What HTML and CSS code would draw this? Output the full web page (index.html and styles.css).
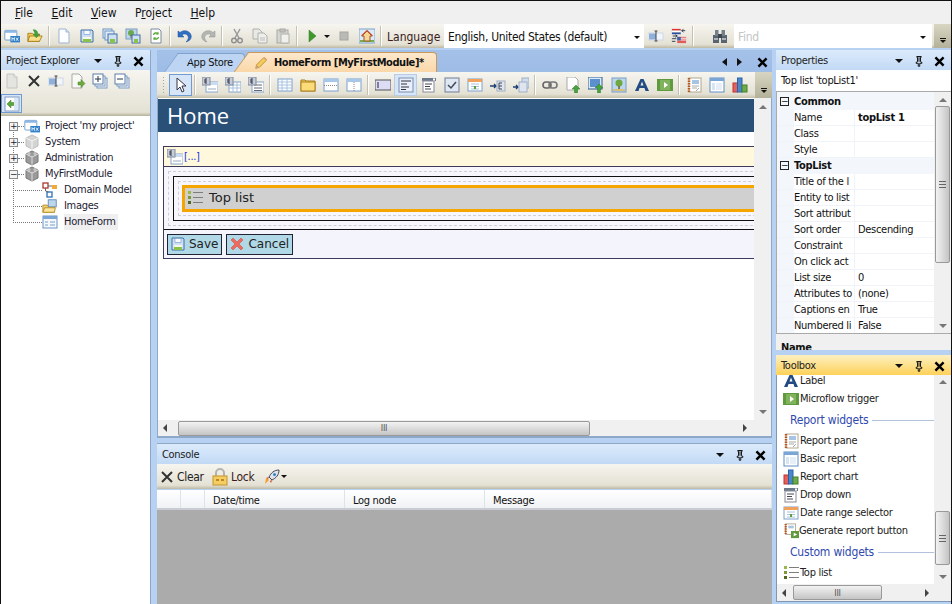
FILE: index.html

```html
<!DOCTYPE html>
<html lang="en">
<head>
  <meta charset="UTF-8" />
  <meta name="viewport" content="width=device-width, initial-scale=1.0" />
  <title>Mendix Business Modeler</title>
  <link rel="stylesheet" href="styles.css">
</head>
<body>
  <svg class="defs" width="0" height="0">
    <defs>
      <symbol id="i-project" viewBox="0 0 20 16"><rect x="1" y="1" width="15" height="12" rx="1" fill="#fff" stroke="#5b8ec4"/><rect x="1" y="1" width="15" height="3" fill="#8fb8e4"/><rect x="8" y="8" width="12" height="8" fill="#2f80c8"/><path d="M10 14v-4l1.500 2 1.500-2v4M15 10l3 4M18 10l-3 4" stroke="#fff" fill="none"/></symbol>
      <symbol id="i-open" viewBox="0 0 18 16"><path d="M1 14V5h5l1 1h7v8z" fill="#f3c95a" stroke="#a97c1d"/><path d="M1 14l2-6h14l-3 6z" fill="#fbe08c" stroke="#a97c1d"/><path d="M7 1c4 0 5 2 5 5h2l-3.500 4L7 6h2c0-2-1-3-2-5z" fill="#3fa535" stroke="#2a7a22" stroke-width=".5"/></symbol>
      <symbol id="i-doc" viewBox="0 0 16 16"><path d="M3 1h7l3 3v11H3z" fill="#fdfeff" stroke="#9db5d0"/><path d="M10 1v3h3" fill="#dfe9f4" stroke="#9db5d0"/></symbol>
      <symbol id="i-docgray" viewBox="0 0 16 16"><path d="M3 1h7l3 3v11H3z" fill="#e4e4e0" stroke="#c4c4c0"/><path d="M10 1v3h3" fill="#f2f2ee" stroke="#c4c4c0"/></symbol>
      <symbol id="i-save" viewBox="0 0 16 16"><path d="M2 2h11l1 1v11H2z" fill="#cfe0f5" stroke="#3e6ea8"/><rect x="5" y="2.500" width="6" height="4" fill="#f7fbff" stroke="#6f95c0" stroke-width=".6"/><rect x="4" y="9" width="8" height="5" fill="#8bc34a"/><rect x="4" y="9" width="8" height="2" fill="#f4f8ec"/></symbol>
      <symbol id="i-saveall" viewBox="0 0 16 16"><rect x="1" y="1" width="9" height="9" fill="#e2ecf8" stroke="#6f95c0"/><rect x="3" y="3" width="9" height="9" fill="#e2ecf8" stroke="#6f95c0"/><rect x="6" y="6" width="9" height="9" fill="#cfe0f5" stroke="#3e6ea8"/><rect x="8" y="11" width="5" height="4" fill="#8bc34a"/></symbol>
      <symbol id="i-saveimg" viewBox="0 0 16 16"><rect x="1" y="1" width="11" height="10" fill="#bcd6ee" stroke="#7a9cc0"/><circle cx="6" cy="5" r="3" fill="#6ba84f"/><rect x="5.500" y="7" width="1" height="3" fill="#7a5a30"/><rect x="7" y="7" width="8" height="8" fill="#cfe0f5" stroke="#3e6ea8"/><rect x="9" y="11" width="4" height="4" fill="#8bc34a"/></symbol>
      <symbol id="i-refresh" viewBox="0 0 16 16"><path d="M3 1h8l2 2v12H3z" fill="#fff" stroke="#7d8ba0"/><path d="M5.500 7a2.500 2.500 0 0 1 4.500-1M10.500 9a2.500 2.500 0 0 1-4.500 1" fill="none" stroke="#58a632" stroke-width="1.300"/><path d="M10.500 3.500v3h-3zM5.500 12.500v-3h3z" fill="#58a632"/></symbol>
      <symbol id="i-undo" viewBox="0 0 16 16"><path d="M1 3v6h6L5 7c2-2 5-1 6 1 1 2 0 4-2 6 4-1 6-4 5-7-1-4-7-6-11-2.500z" fill="#2f6fc4" stroke="#1c4d92" stroke-width=".5"/></symbol>
      <symbol id="i-redo" viewBox="0 0 16 16"><path d="M15 3v6H9l2-2C9 5 6 6 5 8c-1 2 0 4 2 6-4-1-6-4-5-7 1-4 7-6 11-2.500z" fill="#b4b6b4" stroke="#8f918f" stroke-width=".5"/></symbol>
      <symbol id="i-cut" viewBox="0 0 16 16"><path d="M5 1l5 9M11 1L6 10" stroke="#9a9c9c" stroke-width="1.500" fill="none"/><circle cx="5" cy="12.500" r="2.300" fill="none" stroke="#8f8f8f" stroke-width="1.400"/><circle cx="11" cy="12.500" r="2.300" fill="none" stroke="#8f8f8f" stroke-width="1.400"/></symbol>
      <symbol id="i-copy" viewBox="0 0 16 16"><path d="M1 1h6l3 3v7H1z" fill="#e8e8e4" stroke="#b0b0ac"/><path d="M6 5h6l3 3v7H6z" fill="#eeeeea" stroke="#b0b0ac"/><path d="M8 10h5M8 12h5" stroke="#bdbdb9"/></symbol>
      <symbol id="i-paste" viewBox="0 0 16 16"><rect x="2" y="2" width="11" height="13" fill="#d7d7d2" stroke="#a8a8a4"/><rect x="5" y="1" width="5" height="3" fill="#c4c4c0" stroke="#a8a8a4"/><rect x="6" y="6" width="8" height="9" fill="#f0f0ec" stroke="#b0b0ac"/></symbol>
      <symbol id="i-play" viewBox="0 0 16 16"><path d="M5 2l7 6-7 6z" fill="#3f9a2c" stroke="#2f7d20" stroke-width=".5"/></symbol>
      <symbol id="i-stop" viewBox="0 0 16 16"><rect x="4" y="4" width="8" height="8" fill="#b9b9b5" stroke="#a5a5a1"/></symbol>
      <symbol id="i-home" viewBox="0 0 16 16"><rect x="0" y="1" width="16" height="14" fill="#dbe9f8" stroke="#7ea3cc"/><rect x="1" y="12" width="14" height="2" fill="#75ad4a"/><path d="M3 8l5-5 5 5h-2v5H5V8z" fill="#f4d89a" stroke="#a5552a"/><path d="M2.500 8L8 2.500 13.500 8" fill="none" stroke="#c2502a" stroke-width="1.200"/></symbol>
      <symbol id="i-rename" viewBox="0 0 16 16"><rect x="0" y="5" width="15" height="7" fill="#f2f6fc" stroke="#cfd8e4"/><rect x="1" y="5.500" width="7" height="6" fill="#8fb0d8"/><path d="M8 3v10M6.500 3h3M6.500 13h3" stroke="#444" fill="none"/></symbol>
      <symbol id="i-flags" viewBox="0 0 18 18"><rect x="1" y="1" width="10" height="2" fill="#d33"/><rect x="1" y="3" width="10" height="2" fill="#fff" stroke="#ccc" stroke-width=".3"/><rect x="1" y="5" width="10" height="2" fill="#2a4f9c"/><path d="M12 3h4M14 1.500L12 3l2 1.500M2 9h5M5 7.500L7 9 5 10.500" stroke="#234" fill="none"/><rect x="7" y="10" width="10" height="7" fill="#e25b5b"/><rect x="7" y="11" width="10" height="1" fill="#fff"/><rect x="7" y="13" width="10" height="1" fill="#fff"/><rect x="7" y="10" width="4" height="4" fill="#3a5fa8"/><path d="M1 12h5M1 15h4" stroke="#234"/></symbol>
      <symbol id="i-binoc" viewBox="0 0 16 16"><rect x="1" y="7" width="6" height="8" fill="#5a6470"/><rect x="9" y="7" width="6" height="8" fill="#5a6470"/><rect x="3" y="2" width="3.500" height="6" fill="#76808c"/><rect x="9.500" y="2" width="3.500" height="6" fill="#76808c"/><rect x="6" y="6" width="4" height="4" fill="#3e4650"/><rect x="2" y="10" width="4" height="2" fill="#aab2bc"/><rect x="10" y="10" width="4" height="2" fill="#aab2bc"/></symbol>
      <symbol id="i-x" viewBox="0 0 16 16"><path d="M3 3l10 10M13 3L3 13" stroke="#333" stroke-width="2" fill="none"/></symbol>
      <symbol id="i-docgo" viewBox="0 0 16 16"><path d="M2 1h7l3 3v11H2z" fill="#f8f8f4" stroke="#a9a9a5"/><path d="M8 9h3V6.500l4 4-4 4V12H8z" fill="#6fa83e" stroke="#47802a" stroke-width=".5"/></symbol>
      <symbol id="i-expand" viewBox="0 0 16 16"><rect x="5" y="5" width="10" height="10" fill="#eef4fb" stroke="#7d9cc0"/><rect x="3" y="3" width="10" height="10" fill="#eef4fb" stroke="#7d9cc0"/><rect x="1" y="1" width="10" height="10" fill="#fff" stroke="#5f7fa6"/><path d="M3 6h6M6 3v6" stroke="#234"/></symbol>
      <symbol id="i-collapse" viewBox="0 0 16 16"><rect x="5" y="5" width="10" height="10" fill="#eef4fb" stroke="#7d9cc0"/><rect x="3" y="3" width="10" height="10" fill="#eef4fb" stroke="#7d9cc0"/><rect x="1" y="1" width="10" height="10" fill="#fff" stroke="#5f7fa6"/><path d="M3 6h6" stroke="#234"/></symbol>
      <symbol id="i-sync" viewBox="0 0 16 16"><rect x="1" y="1" width="14" height="14" fill="#fff" stroke="#7d9cc0"/><path d="M3 8l4-4v2.500h5v3H7V12z" fill="#5aa83a" stroke="#38802a" stroke-width=".5"/><rect x="10" y="2" width="4" height="12" fill="#dbe7f4"/></symbol>
      <symbol id="i-cube" viewBox="0 0 16 16"><path d="M8 1l6 3v8l-6 3-6-3V4z" fill="#9a9a9a" stroke="#777"/><path d="M2 4l6 3 6-3M8 7v8" stroke="#dedede" fill="none"/><circle cx="5" cy="3.500" r="1.500" fill="#c6c6c6"/><circle cx="11" cy="3.500" r="1.500" fill="#c6c6c6"/></symbol>
      <symbol id="i-cubelight" viewBox="0 0 16 16"><path d="M8 1l6 3v8l-6 3-6-3V4z" fill="#d4d4d4" stroke="#bdbdbd"/><path d="M2 4l6 3 6-3M8 7v8" stroke="#f4f4f4" fill="none"/></symbol>
      <symbol id="i-domain" viewBox="0 0 16 16"><rect x="1" y="1" width="5" height="5" fill="#fff" stroke="#b2352a" stroke-width="1.300"/><rect x="10" y="3" width="5" height="4" fill="#f2a93a"/><rect x="5" y="10" width="5" height="5" fill="#fff" stroke="#2e6fb5" stroke-width="1.300"/><path d="M6 4h4M3.500 6v3l3 1" stroke="#666" fill="none"/></symbol>
      <symbol id="i-images" viewBox="0 0 18 16"><path d="M1 15V7h5l1 1h7v7z" fill="#f6d36a" stroke="#b28a28"/><rect x="7" y="1" width="9" height="8" fill="#bcd6ee" stroke="#5f86b0"/><path d="M1 15l2-5h12l-1 5z" fill="#fce69c" stroke="#b28a28"/></symbol>
      <symbol id="i-form" viewBox="0 0 16 16"><rect x="1" y="2" width="14" height="12" fill="#f4f8fd" stroke="#6a94c4"/><rect x="1" y="2" width="14" height="3" fill="#7aa5d6"/><path d="M3 8h3M8 8h5M3 11h3M8 11h5" stroke="#7aa0c8"/></symbol>
      <symbol id="i-ptr" viewBox="0 0 16 16"><path d="M4 1v12l3-3 2 5 2-1-2-5h4z" fill="#fff" stroke="#334"/></symbol>
      <symbol id="i-dv" viewBox="0 0 16 16"><rect x="4" y="5" width="12" height="10" fill="#fff" stroke="#86a6cc"/><rect x="4" y="5" width="12" height="3" fill="#c9dcf2"/><rect x="0" y="0" width="8" height="8" fill="#c7cdd8" stroke="#7f8a9c"/><path d="M3 2v4M3 2h2M3 4h2M3 6h2" stroke="#334" fill="none"/><path d="M6 12h8" stroke="#9ab"/></symbol>
      <symbol id="i-dg" viewBox="0 0 16 16"><rect x="4" y="5" width="12" height="10" fill="#fff" stroke="#86a6cc"/><path d="M4 8h12M4 11h12M8 5v10M12 5v10" stroke="#a9c0dc"/><rect x="0" y="0" width="8" height="8" fill="#c7cdd8" stroke="#7f8a9c"/><path d="M3 2v4M3 2h2M3 4h2M3 6h2" stroke="#334" fill="none"/></symbol>
      <symbol id="i-tv" viewBox="0 0 16 16"><rect x="4" y="5" width="12" height="10" fill="#fff" stroke="#86a6cc"/><path d="M6 8h8M6 11h8M6 13.500h8" stroke="#667"/><rect x="0" y="0" width="8" height="8" fill="#c7cdd8" stroke="#7f8a9c"/><path d="M3 2v4M3 2h2M3 4h2M3 6h2" stroke="#334" fill="none"/></symbol>
      <symbol id="i-table" viewBox="0 0 16 16"><rect x="1" y="2" width="14" height="12" fill="#fff" stroke="#7aa0cc"/><path d="M1 5h14M1 8h14M1 11h14M5 2v12M10 2v12" stroke="#a8c2e0"/></symbol>
      <symbol id="i-tabfolder" viewBox="0 0 16 16"><path d="M1 14V3h4l1 1h9v10z" fill="#f6cf58" stroke="#a98020"/><rect x="1" y="5" width="14" height="9" fill="#fbdc78" stroke="#a98020"/></symbol>
      <symbol id="i-rows" viewBox="0 0 16 16"><rect x="1" y="2" width="14" height="12" fill="#fff" stroke="#7aa0cc"/><rect x="1" y="2" width="14" height="3" fill="#a8c8ea"/><path d="M1 8.500h14" stroke="#8a8a8a" stroke-dasharray="1 1"/></symbol>
      <symbol id="i-cols" viewBox="0 0 16 16"><rect x="1" y="2" width="14" height="12" fill="#fff" stroke="#7aa0cc"/><rect x="1" y="2" width="14" height="3" fill="#a8c8ea"/><path d="M8 5v9" stroke="#8a8a8a" stroke-dasharray="1 1"/></symbol>
      <symbol id="i-input" viewBox="0 0 16 16"><rect x="0" y="3" width="16" height="10" fill="#dcdcf4" stroke="#555"/><path d="M3 5v6" stroke="#223"/></symbol>
      <symbol id="i-textarea" viewBox="0 0 16 16"><rect x="1" y="1" width="14" height="14" fill="#e8eefa" stroke="#7d8fb0"/><path d="M3 4h10M3 7h6M3 10h8M3 12.500h5" stroke="#334"/></symbol>
      <symbol id="i-drop" viewBox="0 0 16 16"><rect x="1" y="1" width="14" height="3" fill="#6c7a8c"/><rect x="2" y="4" width="11" height="11" fill="#fff" stroke="#889"/><path d="M4 7h7M4 9.500h5M4 12h6" stroke="#445"/><rect x="12" y="1.500" width="2" height="2" fill="#fff"/></symbol>
      <symbol id="i-check" viewBox="0 0 16 16"><rect x="1" y="1" width="14" height="14" fill="#dfe7f2" stroke="#6f7f96"/><path d="M4 8l3 3 5-6" stroke="#3f4a5a" stroke-width="1.500" fill="none"/></symbol>
      <symbol id="i-date" viewBox="0 0 16 16"><rect x="1" y="2" width="14" height="12" fill="#fff" stroke="#7aa0cc"/><rect x="1" y="2" width="14" height="3" fill="#f0a25c"/><path d="M4 7h8M4 9.500h8M4 12h8" stroke="#a8c2e0"/><rect x="7" y="9" width="2" height="3" fill="#59a23a"/></symbol>
      <symbol id="i-ref" viewBox="0 0 16 16"><path d="M0 9h6M4 7l2 2-2 2" stroke="#1c3f78" stroke-width="1.300" fill="none"/><rect x="7" y="4" width="8" height="10" fill="#dfe5ee" stroke="#9fb0c4"/><path d="M9 6v6M9 6h3M9 9h3M9 12h3" stroke="#445" fill="none"/></symbol>
      <symbol id="i-refs" viewBox="0 0 16 16"><path d="M0 10h5M3 8l2 2-2 2" stroke="#1c3f78" stroke-width="1.300" fill="none"/><rect x="9" y="1" width="7" height="10" fill="#cfdcee" stroke="#9fb0c4"/><rect x="6" y="5" width="8" height="10" fill="#dfe5ee" stroke="#9fb0c4"/></symbol>
      <symbol id="i-link" viewBox="0 0 16 16"><rect x="1" y="5" width="8" height="6" rx="3" fill="none" stroke="#666" stroke-width="1.600"/><rect x="7" y="5" width="8" height="6" rx="3" fill="none" stroke="#777" stroke-width="1.600"/></symbol>
      <symbol id="i-docup" viewBox="0 0 16 16"><path d="M2 0h8l3 3v10H2z" fill="#fff" stroke="#a9a9b0"/><path d="M11 8l4 4h-2.500v4h-3v-4H7z" fill="#49a23c" stroke="#2f7d2a" stroke-width=".5"/></symbol>
      <symbol id="i-imgup" viewBox="0 0 16 16"><rect x="0" y="0" width="14" height="12" fill="#dbe9f8" stroke="#2d5d95"/><rect x="2" y="2" width="10" height="8" fill="#5b90cc"/><path d="M11 7l4 4h-2.500v5h-3v-5H7z" fill="#49a23c" stroke="#2f7d2a" stroke-width=".5"/></symbol>
      <symbol id="i-image" viewBox="0 0 16 16"><rect x="1" y="1" width="14" height="14" fill="#bcd6f0" stroke="#7a9cc0"/><circle cx="8" cy="6" r="3.500" fill="#6fa83e"/><rect x="7.300" y="9" width="1.500" height="3" fill="#7a5a30"/><rect x="2" y="12" width="12" height="2" fill="#d8c27a"/></symbol>
      <symbol id="i-label" viewBox="0 0 16 16"><path d="M1 14L6.500 2h3L15 14h-3.500l-1-3h-5l-1 3zM6.500 8.500h3L8 4.500z" fill="#234a82"/></symbol>
      <symbol id="i-micro" viewBox="0 0 16 16"><rect x="0" y="2" width="16" height="12" fill="#5f9a3e"/><rect x="3" y="3" width="10" height="10" fill="#80b35c"/><path d="M7 5l4 3-4 3z" fill="#fff"/></symbol>
      <symbol id="i-pane" viewBox="0 0 16 16"><rect x="3" y="1" width="12" height="14" fill="#fff" stroke="#b0a890"/><path d="M3 1v14" stroke="#b5561e" stroke-width="2.500" stroke-dasharray="1.500 1"/><rect x="6" y="3" width="7" height="4" fill="#a8c4e4"/><path d="M6 9h7M6 11h5M10 14l3-3" stroke="#aaa"/></symbol>
      <symbol id="i-basic" viewBox="0 0 16 16"><rect x="1" y="1" width="14" height="14" fill="#fff" stroke="#5f8fc4"/><rect x="1" y="1" width="14" height="3" fill="#7aa5d6"/><rect x="3" y="6" width="3" height="7" fill="#d7e4f2"/><rect x="7" y="6" width="6" height="7" fill="#e7eef7"/></symbol>
      <symbol id="i-chart" viewBox="0 0 16 16"><rect x="1" y="6" width="4.500" height="9" fill="#e4605c" stroke="#b33"/><rect x="5.500" y="1" width="4.500" height="14" fill="#4a86cc" stroke="#2a62a8"/><rect x="10" y="8" width="5" height="7" fill="#6caa4a" stroke="#47802a"/></symbol>
      <symbol id="i-gen" viewBox="0 0 18 16"><rect x="3" y="0" width="11" height="12" fill="#fff" stroke="#b0a890"/><path d="M3 0v12" stroke="#b5561e" stroke-width="2.500" stroke-dasharray="1.500 1"/><rect x="6" y="2" width="6" height="3" fill="#a8c4e4"/><rect x="9" y="8" width="9" height="8" fill="#5f9a3e"/><path d="M12 10l4 2-4 2z" fill="#fff"/></symbol>
      <symbol id="i-toplist" viewBox="0 0 16 16"><rect x="1" y="1" width="3" height="3" fill="#9ab84a"/><rect x="1" y="6" width="3" height="3" fill="#7a9a3a"/><rect x="1" y="11" width="3" height="3" fill="#4d6a20"/><path d="M6 2.500h10M6 7.500h10M6 12.500h10" stroke="#7d7d7d"/></symbol>
      <symbol id="i-lock" viewBox="0 0 16 18"><path d="M4 8V5a4 4 0 0 1 8 0v3" fill="none" stroke="#b3b3b3" stroke-width="2"/><rect x="1" y="8" width="14" height="9" fill="#f6cd62" stroke="#c2942c"/><rect x="4" y="11" width="3" height="2" fill="#b98a24"/><rect x="9" y="11" width="3" height="2" fill="#b98a24"/></symbol>
      <symbol id="i-rocket" viewBox="0 0 16 16"><path d="M15 1c-5 0-8 3-10 7l3 3c4-2 7-5 7-10z" fill="#dfe3ea" stroke="#445"/><circle cx="10.500" cy="5.500" r="1.500" fill="#2f86cc"/><path d="M5 8L2 9l2 1zM8 11l-1 3-1-2z" fill="#c9342a"/><path d="M5 11L1 15l1-6 2 1 1 1z" fill="#f3a02c"/></symbol>
      <symbol id="i-pencil" viewBox="0 0 16 16"><path d="M2 14l1-4 8-8 3 3-8 8z" fill="#f4cd5e" stroke="#b58a2a"/><path d="M2 14l1-4 3 3z" fill="#c9a27a"/><path d="M11 2l3 3 1-1-3-3z" fill="#e59a88"/></symbol>
      <symbol id="i-cancel" viewBox="0 0 16 16"><path d="M2 4l2-2 4 4 4-4 2 2-4 4 4 4-2 2-4-4-4 4-2-2 4-4z" fill="#ee6a5e" stroke="#c9443a" stroke-width=".5"/></symbol>
      <symbol id="i-dark" viewBox="0 0 16 16"><path d="M3 3l10 10M13 3L3 13" stroke="#000" stroke-width="3" fill="none"/></symbol>
      <symbol id="i-pin" viewBox="0 0 16 16"><path d="M5 2h6v1h-1v6l2 1v1H9v4H7v-4H4v-1l2-1V3H5zM8 3v6" fill="none" stroke="#111" stroke-width="1.300"/></symbol>
    </defs>
  </svg>

  <header class="menubar">
    <span><u>F</u>ile</span>
    <span><u>E</u>dit</span>
    <span><u>V</u>iew</span>
    <span>P<u>r</u>oject</span>
    <span><u>H</u>elp</span>
  </header>

  <div class="toolbar main-tools">
    <i class="btn"><svg><use href="#i-project"/></svg></i>
    <i class="btn"><svg><use href="#i-open"/></svg></i>
    <b class="sep"></b>
    <i class="btn"><svg><use href="#i-doc"/></svg></i>
    <i class="btn"><svg><use href="#i-save"/></svg></i>
    <i class="btn"><svg><use href="#i-saveall"/></svg></i>
    <i class="btn"><svg><use href="#i-saveimg"/></svg></i>
    <i class="btn"><svg><use href="#i-refresh"/></svg></i>
    <b class="sep"></b>
    <i class="btn"><svg><use href="#i-undo"/></svg></i>
    <i class="btn"><svg><use href="#i-redo"/></svg></i>
    <b class="sep"></b>
    <i class="btn"><svg><use href="#i-cut"/></svg></i>
    <i class="btn"><svg><use href="#i-copy"/></svg></i>
    <i class="btn"><svg><use href="#i-paste"/></svg></i>
    <b class="sep"></b>
    <i class="btn"><svg><use href="#i-play"/></svg></i>
    <b class="tiny-arrow"></b>
    <i class="btn"><svg><use href="#i-stop"/></svg></i>
    <i class="btn"><svg><use href="#i-home"/></svg></i>
    <b class="sep"></b>
    <span class="lang-label">Language</span>
    <div class="combo lang-combo"><span>English, United States (default)</span><b class="tiny-arrow"></b></div>
    <i class="btn"><svg><use href="#i-rename"/></svg></i>
    <i class="btn"><svg><use href="#i-flags"/></svg></i>
    <b class="sep"></b>
    <i class="btn binoc"><svg><use href="#i-binoc"/></svg></i>
    <div class="combo find-combo"><span>Find</span><b class="tiny-arrow"></b></div>
    <div class="chevron"><b></b><b class="tiny-arrow"></b></div>
  </div>

  <main class="workspace">
    <aside class="panel explorer">
      <div class="titlebar">
        <span>Project Explorer</span>
        <b class="tiny-arrow big"></b>
        <svg class="pin"><use href="#i-pin"/></svg>
        <svg class="close"><use href="#i-dark"/></svg>
      </div>
      <div class="explorer-tools">
        <div class="explorer-row">
          <i class="btn"><svg><use href="#i-docgray"/></svg></i>
          <i class="btn"><svg><use href="#i-x"/></svg></i>
          <i class="btn"><svg><use href="#i-rename"/></svg></i>
          <i class="btn"><svg><use href="#i-docgo"/></svg></i>
          <i class="btn"><svg><use href="#i-expand"/></svg></i>
          <i class="btn"><svg><use href="#i-collapse"/></svg></i>
        </div>
        <div class="explorer-row"><i class="btn active small"><svg><use href="#i-sync"/></svg></i></div>
      </div>
      <ul class="tree">
        <li><b class="exp">+</b><b class="dots"></b><svg><use href="#i-project"/></svg><span>Project 'my project'</span></li>
        <li><b class="exp">+</b><b class="dots"></b><svg><use href="#i-cubelight"/></svg><span>System</span></li>
        <li><b class="exp">+</b><b class="dots"></b><svg><use href="#i-cube"/></svg><span>Administration</span></li>
        <li><b class="exp">&minus;</b><b class="dots"></b><svg><use href="#i-cube"/></svg><span>MyFirstModule</span></li>
        <li class="child"><b class="dots"></b><svg><use href="#i-domain"/></svg><span>Domain Model</span></li>
        <li class="child"><b class="dots"></b><svg><use href="#i-images"/></svg><span>Images</span></li>
        <li class="child"><b class="dots"></b><svg><use href="#i-form"/></svg><span class="sel">HomeForm</span></li>
      </ul>
    </aside>

    <section class="center">
      <div class="doc">
        <div class="tabs">
          <div class="tab app-tab">App Store</div>
          <div class="tab form-tab"><svg><use href="#i-pencil"/></svg><span>HomeForm [MyFirstModule]*</span></div>
          <div class="tab-nav">
            <b class="nav-left"></b>
            <b class="nav-right"></b>
            <svg class="close"><use href="#i-dark"/></svg>
          </div>
        </div>
        <div class="toolbar widget-tools">
          <b class="grip"></b>
          <i class="btn active"><svg><use href="#i-ptr"/></svg></i>
          <b class="sep"></b>
          <i class="btn"><svg><use href="#i-dv"/></svg></i>
          <i class="btn"><svg><use href="#i-dg"/></svg></i>
          <i class="btn"><svg><use href="#i-tv"/></svg></i>
          <b class="sep"></b>
          <i class="btn"><svg><use href="#i-table"/></svg></i>
          <i class="btn"><svg><use href="#i-tabfolder"/></svg></i>
          <i class="btn"><svg><use href="#i-rows"/></svg></i>
          <i class="btn"><svg><use href="#i-cols"/></svg></i>
          <b class="sep"></b>
          <i class="btn"><svg><use href="#i-input"/></svg></i>
          <i class="btn active soft"><svg><use href="#i-textarea"/></svg></i>
          <i class="btn"><svg><use href="#i-drop"/></svg></i>
          <i class="btn"><svg><use href="#i-check"/></svg></i>
          <i class="btn"><svg><use href="#i-date"/></svg></i>
          <i class="btn"><svg><use href="#i-ref"/></svg></i>
          <i class="btn"><svg><use href="#i-refs"/></svg></i>
          <b class="sep"></b>
          <i class="btn"><svg><use href="#i-link"/></svg></i>
          <i class="btn"><svg><use href="#i-docup"/></svg></i>
          <i class="btn"><svg><use href="#i-imgup"/></svg></i>
          <i class="btn"><svg><use href="#i-image"/></svg></i>
          <i class="btn"><svg><use href="#i-label"/></svg></i>
          <i class="btn"><svg><use href="#i-micro"/></svg></i>
          <b class="sep"></b>
          <i class="btn"><svg><use href="#i-pane"/></svg></i>
          <i class="btn"><svg><use href="#i-basic"/></svg></i>
          <i class="btn"><svg><use href="#i-chart"/></svg></i>
          <div class="chevron"><b></b><b class="tiny-arrow"></b></div>
        </div>
        <div class="canvas-wrap">
          <div class="canvas">
            <div class="page-title">Home</div>
            <div class="dataview">
              <div class="dv-head"><svg><use href="#i-dv"/></svg><span>[...]</span></div>
              <div class="dv-body">
                <div class="dash-outer">
                  <div class="solid-box">
                    <div class="dash-inner">
                      <div class="toplist"><svg><use href="#i-toplist"/></svg><span>Top list</span></div>
                    </div>
                  </div>
                </div>
              </div>
              <div class="dv-foot">
                <div class="form-btn save"><svg><use href="#i-save"/></svg>Save</div>
                <div class="form-btn cancel"><svg><use href="#i-cancel"/></svg>Cancel</div>
              </div>
            </div>
          </div>
          <div class="vscroll canvas-v"><b class="up"></b><b class="down"></b></div>
          <div class="hscroll canvas-h"><b class="left"></b><div class="thumb"><em>III</em></div><b class="right"></b></div>
          <div class="corner"></div>
        </div>
      </div>

      <div class="console">
        <div class="titlebar"><span>Console</span>
          <b class="tiny-arrow big"></b>
          <svg class="pin"><use href="#i-pin"/></svg>
          <svg class="close"><use href="#i-dark"/></svg>
        </div>
        <div class="toolbar console-tools">
          <svg><use href="#i-x"/></svg><span class="clear">Clear</span>
          <svg class="lock"><use href="#i-lock"/></svg><span class="locktxt">Lock</span>
          <svg class="rocket"><use href="#i-rocket"/></svg><b class="tiny-arrow"></b>
        </div>
        <div class="log-head">
          <div class="c1"></div><div class="c1"></div>
          <div class="c2">Date/time</div>
          <div class="c2">Log node</div>
          <div class="c3">Message</div>
        </div>
        <div class="log-body"></div>
      </div>
    </section>

    <aside class="side">
      <div class="panel props">
        <div class="titlebar">
          <span>Properties</span>
          <b class="tiny-arrow big"></b>
          <svg class="pin"><use href="#i-pin"/></svg>
          <svg class="close"><use href="#i-dark"/></svg>
        </div>
        <div class="props-caption">Top list 'topList1'</div>
        <div class="props-grid">
          <div class="rows">
            <div class="group"><b class="box">&minus;</b>Common</div>
            <div class="row"><span>Name</span><span class="strong">topList 1</span></div>
            <div class="row"><span>Class</span><span></span></div>
            <div class="row"><span>Style</span><span></span></div>
            <div class="group"><b class="box">&minus;</b>TopList</div>
            <div class="row"><span>Title of the l</span><span></span></div>
            <div class="row"><span>Entity to list</span><span></span></div>
            <div class="row"><span>Sort attribut</span><span></span></div>
            <div class="row"><span>Sort order</span><span>Descending</span></div>
            <div class="row"><span>Constraint</span><span></span></div>
            <div class="row"><span>On click act</span><span></span></div>
            <div class="row"><span>List size</span><span>0</span></div>
            <div class="row"><span>Attributes to</span><span>(none)</span></div>
            <div class="row"><span>Captions en</span><span>True</span></div>
            <div class="row"><span>Numbered li</span><span>False</span></div>
          </div>
          <div class="vscroll props-v"><b class="up"></b><div class="vthumb"><em></em></div><b class="down"></b></div>
        </div>
        <div class="props-help"><strong>Name</strong></div>
      </div>

      <div class="panel toolbox">
        <div class="titlebar yellow">
          <span>Toolbox</span>
          <b class="tiny-arrow big"></b>
          <svg class="pin"><use href="#i-pin"/></svg>
          <svg class="close"><use href="#i-dark"/></svg>
        </div>
        <div class="toolbox-body">
          <div class="items">
            <div class="item cut"><svg><use href="#i-label"/></svg>Label</div>
            <div class="item"><svg><use href="#i-micro"/></svg>Microflow trigger</div>
            <div class="cat"><span>Report widgets</span></div>
            <div class="item"><svg><use href="#i-pane"/></svg>Report pane</div>
            <div class="item"><svg><use href="#i-basic"/></svg>Basic report</div>
            <div class="item"><svg><use href="#i-chart"/></svg>Report chart</div>
            <div class="item"><svg><use href="#i-drop"/></svg>Drop down</div>
            <div class="item"><svg><use href="#i-date"/></svg>Date range selector</div>
            <div class="item gen"><svg><use href="#i-gen"/></svg>Generate report button</div>
            <div class="cat"><span>Custom widgets</span></div>
            <div class="item"><svg><use href="#i-toplist"/></svg>Top list</div>
          </div>
          <div class="vscroll toolbox-v"><b class="up"></b><div class="vthumb"><em></em></div><b class="down"></b></div>
          <div class="hscroll toolbox-h"><b class="left"></b><div class="thumb"><em>III</em></div><b class="right"></b></div>
          <div class="corner"></div>
        </div>
      </div>
    </aside>
  </main>
</body>
</html>
```

FILE: styles.css

```css
* {
  box-sizing: border-box;
}
html, body {
  margin: 0;
  height: 604px;
  overflow: hidden;
}
body {
  width: 952px;
  border: 1px solid #111;
  border-bottom: none;
  background-color: #f0f0f0;
  color: #111;
  font-family: "DejaVu Sans Condensed", "DejaVu Sans", sans-serif;
  font-stretch: condensed;
  font-size: 11px;
  letter-spacing: -.3px;
  line-height: 16px;
  display: flex;
  flex-direction: column;
}
i, em {
  font-style: normal;
}
.defs {
  position: absolute;
}

/* menu + main toolbar */
.menubar {
  height: 23px;
  flex: none;
  display: flex;
  gap: 18.5px;
  align-items: center;
  padding-left: 14px;
  font-size: 12px;
  letter-spacing: 0;
}
.toolbar {
  display: flex;
  align-items: center;
  background: linear-gradient(#f6f5ef, #e4e1d4 85%, #bdb9a4);
}
.main-tools {
  height: 24px;
  flex: none;
  margin-left: -1px;
}
.btn {
  width: 23px;
  height: 22px;
  flex: none;
  display: flex;
  align-items: center;
  justify-content: center;
}
.btn svg {
  width: 16px;
  height: 16px;
}
.btn.active {
  background: #d6e6f8;
  border: 1px solid #6f9bd0;
}
.btn.active.soft {
  border-color: #b9cce2;
}
.btn.small {
  width: 21px;
  height: 19px;
}
.sep {
  width: 6px;
  height: 20px;
  flex: none;
  background: linear-gradient(90deg, transparent 2px, #c4c1b2 2px, #c4c1b2 3px, #fff 3px, #fff 4px, transparent 4px);
}
.tiny-arrow {
  width: 0;
  height: 0;
  flex: none;
  border-left: 3px solid transparent;
  border-right: 3px solid transparent;
  border-top: 3px solid #111;
}
.tiny-arrow.big {
  border-left-width: 4px;
  border-right-width: 4px;
  border-top-width: 4px;
}
.main-tools > .tiny-arrow {
  margin: 0 2px 0 1px;
}
.lang-label {
  width: 57px;
  margin-left: 3px;
  padding-top: 2px;
  font-size: 12px;
  letter-spacing: 0;
  color: #3a1a20;
  flex: none;
}
.combo {
  height: 24px;
  background: #fff;
  display: flex;
  align-items: center;
  justify-content: space-between;
  padding: 2px 4px 0;
  flex: none;
  font-size: 12px;
}
.lang-combo {
  width: 200px;
}
.find-combo {
  width: 198px;
  color: #c4c4c4;
  margin-left: 3px;
  padding-right: 6px;
}
.binoc {
  margin-left: 12px;
}
.chevron {
  margin-left: auto;
  width: 17px;
  align-self: stretch;
  background: linear-gradient(#d8d5c2, #b4b19a);
  display: flex;
  flex-direction: column;
  align-items: center;
  justify-content: flex-end;
  gap: 1px;
  padding-bottom: 5px;
}
.chevron > b:first-child {
  width: 6px;
  height: 1px;
  background: #111;
}

/* panels */
.workspace {
  flex: 1;
  min-height: 0;
  display: flex;
  padding-top: 2px;
  background-color: #b7d1f3;
}
.panel {
  background-color: #fff;
}
.titlebar {
  height: 20px;
  flex: none;
  display: flex;
  align-items: center;
  padding: 2px 5px 0;
  background: linear-gradient(#dcebfb, #c2d9f5);
  color: #222;
}
.titlebar > span {
  flex: 1;
}
.titlebar.yellow {
  background: linear-gradient(#fdf0c0, #fdd25a);
}
.titlebar .pin {
  width: 12px;
  height: 12px;
  margin: 0 4px 0 10px;
}
.close {
  width: 13px;
  height: 13px;
  margin-left: 4px;
}
.explorer {
  width: 150px;
  display: flex;
  flex-direction: column;
  border-right: 1px solid #90a8c8;
}
.explorer-tools {
  height: 46px;
  flex: none;
  background: linear-gradient(#f6f5ef, #e4e1d4 92%, #b5b19c);
}
.explorer-row {
  display: flex;
  height: 23px;
  align-items: center;
}
.explorer-row:first-child {
  height: 22px;
}
.explorer-row:first-child .btn {
  width: 22px;
}
.tree {
  list-style: none;
  margin: 0;
  padding: 2px 0 0 8px;
  position: relative;
  flex: 1;
  color: #223;
}
.tree li {
  height: 16px;
  display: flex;
  align-items: center;
  white-space: nowrap;
}
.tree li svg {
  width: 16px;
  height: 16px;
  flex: none;
}
.tree li span {
  margin-left: 5px;
}
.exp {
  width: 9px;
  height: 9px;
  flex: none;
  border: 1px solid #8c8c8c;
  background: #f4f4f4;
  font: normal 9px/7px "DejaVu Sans", sans-serif;
  text-align: center;
  z-index: 1;
}
.dots {
  width: 6px;
  height: 1px;
  flex: none;
  border-top: 1px dotted #777;
}
.tree li.child .dots {
  margin-left: 4px;
  width: 29px;
}
.tree li.child span {
  margin-left: 6px;
}
.tree::before {
  content: "";
  position: absolute;
  left: 12px;
  top: 10px;
  height: 97px;
  border-left: 1px dotted #777;
}
.sel {
  background: #efefef;
  padding: 0 2px 0 0;
}

/* center column */
.center {
  width: 615px;
  margin-left: 6px;
  display: flex;
  flex-direction: column;
}
.doc {
  height: 388px;
  flex: none;
  display: flex;
  flex-direction: column;
}
.tabs {
  height: 22px;
  flex: none;
  background: linear-gradient(#a4c1e8, #9dbce6);
  display: flex;
  align-items: flex-end;
  padding-left: 21px;
  position: relative;
}
.tab {
  height: 19px;
  display: flex;
  align-items: center;
  border: 1px solid #7fa2cf;
  border-bottom: none;
  border-radius: 0 4px 0 0;
  position: relative;
  white-space: nowrap;
}
.tab::before {
  content: "";
  position: absolute;
  left: -8px;
  top: -1px;
  bottom: 0;
  width: 16px;
  background: inherit;
  border-left: 1px solid #7fa2cf;
  border-top: 1px solid #7fa2cf;
  transform: skewX(-36deg);
}
.app-tab {
  width: 67px;
  background: #bdd5f3;
  padding-left: 8px;
}
.form-tab {
  width: 189px;
  height: 20px;
  margin-left: 3px;
  background: linear-gradient(#fde8cc, #fad7a8);
  border-color: #c79a5c;
  font-weight: bold;
  letter-spacing: -.45px;
  z-index: 1;
}
.form-tab::before {
  border-color: #c79a5c;
}
.form-tab svg {
  width: 14px;
  height: 14px;
  margin: 0 6px 0 5px;
  position: relative;
  z-index: 1;
}
.form-tab span {
  position: relative;
}
.tab-nav {
  margin-left: auto;
  display: flex;
  align-items: center;
  gap: 10px;
  height: 20px;
  padding-right: 3px;
}
.nav-left, .nav-right {
  width: 0;
  height: 0;
  border-top: 4px solid transparent;
  border-bottom: 4px solid transparent;
}
.nav-left {
  border-right: 5px solid #111;
}
.nav-right {
  border-left: 5px solid #111;
}
.widget-tools {
  height: 26px;
  flex: none;
  background: linear-gradient(#f6f5ef, #e4e1d4 85%, #c4c0aa);
}
.grip {
  width: 12px;
  height: 18px;
  flex: none;
  background: radial-gradient(circle, #a9a694 1px, transparent 1px) 5px 0 / 3px 3px repeat-y;
}
.canvas-wrap {
  flex: 1;
  min-height: 0;
  display: grid;
  grid-template-columns: 596px 17px;
  grid-template-rows: 1fr 16px;
  background: #f0f0f0;
  border: solid #8fa8c8;
  border-width: 0 1px 2px 1px;
}
.canvas {
  background: #fff;
  padding-top: 1px;
  min-width: 0;
  overflow: hidden;
}
.page-title {
  height: 33px;
  background: #2a5078;
  color: #fff;
  font-family: "Open Sans", sans-serif;
  font-stretch: normal;
  font-size: 22px;
  letter-spacing: 0;
  line-height: 33px;
  padding-left: 9px;
}
.dataview {
  margin: 14px -20px 0 5px;
  border: 1px solid #3d3a5c;
}
.dv-head {
  height: 20px;
  background: #fff8dd;
  display: flex;
  align-items: center;
  padding-left: 3px;
  color: #2233dd;
  border-bottom: 1px solid #3d3a5c;
}
.dv-head svg {
  width: 16px;
  height: 16px;
  margin-right: 1px;
}
.dv-body {
  background: #f6f6fc;
  height: 63px;
  padding: 4px 0 0 4px;
  border-bottom: 1px solid #111;
}
.dash-outer {
  height: 55px;
  border: 1px dashed #cfcfd8;
  padding: 4px 0 0 4px;
}
.solid-box {
  height: 45px;
  border: 1px solid #111;
  padding: 4px 0 0 4px;
}
.dash-inner {
  height: 35px;
  border: 1px dashed #cfcfd8;
  padding: 3px 0 0 3px;
}
.toplist {
  height: 27px;
  background: #d0d0d0;
  border: 3px solid #f6a400;
  display: flex;
  align-items: center;
  padding: 0 0 1px 2px;
  font-family: "DejaVu Sans", sans-serif;
  font-stretch: normal;
  font-size: 13px;
  letter-spacing: 0;
  color: #222;
}
.toplist svg {
  width: 16px;
  height: 16px;
  margin-right: 6px;
}
.dv-foot {
  height: 28px;
  background: #f4f4fd;
  display: flex;
  align-items: center;
  gap: 4px;
  padding-left: 3px;
}
.form-btn {
  height: 21px;
  background: #b0d8e6;
  border: 1px solid #223;
  display: flex;
  align-items: center;
  gap: 3px;
  padding: 0 3px 0 2px;
  font-family: "DejaVu Sans", sans-serif;
  font-stretch: normal;
  font-size: 12px;
  letter-spacing: 0;
  color: #222;
}
.form-btn svg {
  width: 16px;
  height: 16px;
}

/* scrollbars */
.vscroll, .hscroll {
  background: #f0f0f0;
  display: flex;
  align-items: center;
  justify-content: space-between;
}
.vscroll {
  flex-direction: column;
}
.hscroll {
  padding: 0 5px;
}
.vscroll .up {
  border-left: 4px solid transparent;
  border-right: 4px solid transparent;
  border-bottom: 4px solid #777;
}
.vscroll .down {
  border-left: 4px solid transparent;
  border-right: 4px solid transparent;
  border-top: 4px solid #777;
}
.hscroll .left {
  border-top: 4px solid transparent;
  border-bottom: 4px solid transparent;
  border-right: 4px solid #444;
}
.hscroll .right {
  border-top: 4px solid transparent;
  border-bottom: 4px solid transparent;
  border-left: 4px solid #444;
}
.canvas-v {
  padding: 7px 0 6px;
}
.corner {
  background: #f0f0f0;
}
.thumb {
  height: 15px;
  background: linear-gradient(#f2f2f2, #dcdcdc 50%, #c4c4c4);
  border: 1px solid #999;
  border-radius: 2px;
  display: flex;
  align-items: center;
  justify-content: center;
  font-size: 9px;
  color: #555;
}
.canvas-h {
  padding-right: 7px;
}
.canvas-h .thumb {
  width: 412px;
  margin: 0 auto 0 11px;
}
.vthumb {
  width: 15px;
  background: linear-gradient(90deg, #f2f2f2, #dcdcdc 50%, #c4c4c4);
  border: 1px solid #999;
  border-radius: 2px;
  display: flex;
  align-items: center;
  justify-content: center;
}
.vthumb em {
  width: 7px;
  height: 7px;
  border-top: 1px solid #666;
  border-bottom: 1px solid #666;
  background: linear-gradient(transparent 2px, #666 2px, #666 3px, transparent 3px);
}

/* console */
.console {
  margin-top: 5px;
  flex: 1;
  display: flex;
  flex-direction: column;
  border-top: 1px solid #8fa8c8;
}
.console-tools {
  height: 25px;
  flex: none;
  padding-left: 2px;
}
.console-tools svg {
  width: 16px;
  height: 16px;
  flex: none;
}
.clear {
  width: 27px;
  margin: 0 8px 0 2px;
  font-size: 12px;
  color: #222;
}
.console-tools .lock {
  height: 18px;
  margin-right: 3px;
}
.locktxt {
  width: 25px;
  color: #3a1a20;
  margin-right: 8px;
  font-size: 12px;
}
.console-tools .tiny-arrow {
  margin-left: 1px;
}
.log-head {
  height: 20px;
  flex: none;
  margin-top: 1px;
  display: flex;
  background: linear-gradient(#fff, #f0f2f5);
  border-bottom: 2px solid #c9cdd3;
}
.log-head > div {
  border-right: 1px solid #dfe2e6;
  padding-left: 8px;
  line-height: 21px;
}
.log-head .c1 {
  width: 24px;
}
.log-head .c2 {
  width: 140px;
}
.log-head .c3 {
  flex: 1;
}
.log-body {
  flex: 1;
  background: #ababab;
}

/* right column */
.side {
  width: 175px;
  margin-left: 4px;
  display: flex;
  flex-direction: column;
}
.props {
  height: 300px;
  flex: none;
  overflow: hidden;
}
.props-caption {
  height: 21px;
  padding: 3px 0 0 5px;
  background: #fff;
}
.props-grid {
  height: 243px;
  display: grid;
  grid-template-columns: 1fr 17px;
  background: #f3f6fb;
  border: 1px solid #aaa;
  border-right: none;
}
.rows {
  padding-top: 2px;
  min-width: 0;
  overflow: hidden;
}
.group {
  height: 16px;
  padding-left: 17px;
  font-weight: bold;
  position: relative;
  background: #f3f6fb;
  color: #111;
}
.box {
  position: absolute;
  left: 3px;
  top: 3px;
  width: 9px;
  height: 9px;
  border: 1px solid #222;
  font: normal 9px/6px "DejaVu Sans", sans-serif;
  text-align: center;
}
.row {
  height: 16px;
  display: grid;
  grid-template-columns: 60px 1fr;
  border-bottom: 1px solid #f0f3f8;
  padding-left: 17px;
}
.row span {
  white-space: nowrap;
  overflow: hidden;
  background: #fff;
}
.row span + span {
  border-left: 1px solid #f0f3f8;
  padding-left: 3px;
}
.strong {
  font-weight: bold;
}
.props-v {
  padding: 6px 0 5px;
}
.props-v .vthumb {
  height: 157px;
  margin: 4px 0 auto;
}
.props-help {
  height: 16px;
  padding: 6px 0 0 5px;
  background: #f0f0f0;
  overflow: hidden;
}
.toolbox {
  margin-top: 5px;
  margin-bottom: 2px;
  flex: 1;
  min-height: 0;
  display: flex;
  flex-direction: column;
}
.toolbox-body {
  flex: 1;
  min-height: 0;
  display: grid;
  grid-template-columns: 1fr 17px;
  grid-template-rows: 1fr 17px;
  border: 1px solid #7f97b5;
  border-width: 0 0 1px 1px;
}
.items {
  overflow: hidden;
  padding-left: 6px;
  min-width: 0;
}
.item {
  height: 18px;
  display: flex;
  align-items: center;
  gap: 1px;
  padding-top: 2px;
  white-space: nowrap;
  color: #222;
}
.item svg {
  width: 16px;
  height: 16px;
  flex: none;
}
.item.cut {
  margin-top: -4px;
}
.item.gen {
  gap: 0;
}
.cat {
  height: 24px;
  display: flex;
  align-items: center;
  padding: 2px 0 0 7px;
  color: #2f49b0;
  font-size: 12px;
  letter-spacing: -.2px;
}
.cat::after {
  content: "";
  flex: 1;
  height: 1px;
  margin-left: 4px;
  background: #b3c2dc;
}
.toolbox-v {
  padding: 5px 0;
}
.toolbox-v .vthumb {
  height: 54px;
  margin-top: auto;
  margin-bottom: 10px;
}
.toolbox-h .thumb {
  width: 89px;
  margin: 0 auto 0 7px;
}
```
